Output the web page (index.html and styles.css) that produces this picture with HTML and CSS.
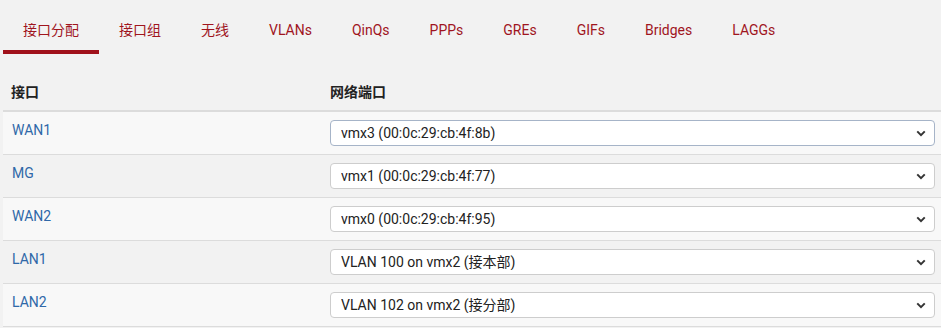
FILE: index.html
```html
<!DOCTYPE html>
<html lang="zh-CN">
<head>
    <meta charset="UTF-8">
    <meta name="viewport" content="width=device-width, initial-scale=1.0">
    <title>接口分配</title>
    <link rel="stylesheet" href="styles.css">
</head>
<body>
    <div class="page">
        <ul class="tabs">
            <li class="tab active"><a href="#">接口分配</a></li>
            <li class="tab"><a href="#">接口组</a></li>
            <li class="tab"><a href="#">无线</a></li>
            <li class="tab"><a href="#">VLANs</a></li>
            <li class="tab"><a href="#">QinQs</a></li>
            <li class="tab"><a href="#">PPPs</a></li>
            <li class="tab"><a href="#">GREs</a></li>
            <li class="tab"><a href="#">GIFs</a></li>
            <li class="tab"><a href="#">Bridges</a></li>
            <li class="tab"><a href="#">LAGGs</a></li>
        </ul>

        <table class="iface-table">
            <thead>
                <tr>
                    <th class="col-name">接口</th>
                    <th>网络端口</th>
                </tr>
            </thead>
            <tbody>
                <tr>
                    <td><a href="#">WAN1</a></td>
                    <td>
                        <div class="select-wrap">
                            <select class="port-select focused">
                                <option>vmx3 (00:0c:29:cb:4f:8b)</option>
                            </select>
                            <svg class="chevron" viewBox="0 0 12 8"><path d="M1.5 1.5 L6 6 L10.5 1.5" /></svg>
                        </div>
                    </td>
                </tr>
                <tr>
                    <td><a href="#">MG</a></td>
                    <td>
                        <div class="select-wrap">
                            <select class="port-select">
                                <option>vmx1 (00:0c:29:cb:4f:77)</option>
                            </select>
                            <svg class="chevron" viewBox="0 0 12 8"><path d="M1.5 1.5 L6 6 L10.5 1.5" /></svg>
                        </div>
                    </td>
                </tr>
                <tr>
                    <td><a href="#">WAN2</a></td>
                    <td>
                        <div class="select-wrap">
                            <select class="port-select">
                                <option>vmx0 (00:0c:29:cb:4f:95)</option>
                            </select>
                            <svg class="chevron" viewBox="0 0 12 8"><path d="M1.5 1.5 L6 6 L10.5 1.5" /></svg>
                        </div>
                    </td>
                </tr>
                <tr>
                    <td><a href="#">LAN1</a></td>
                    <td>
                        <div class="select-wrap">
                            <select class="port-select">
                                <option>VLAN 100 on vmx2 (接本部)</option>
                            </select>
                            <svg class="chevron" viewBox="0 0 12 8"><path d="M1.5 1.5 L6 6 L10.5 1.5" /></svg>
                        </div>
                    </td>
                </tr>
                <tr>
                    <td><a href="#">LAN2</a></td>
                    <td>
                        <div class="select-wrap">
                            <select class="port-select">
                                <option>VLAN 102 on vmx2 (接分部)</option>
                            </select>
                            <svg class="chevron" viewBox="0 0 12 8"><path d="M1.5 1.5 L6 6 L10.5 1.5" /></svg>
                        </div>
                    </td>
                </tr>
            </tbody>
        </table>
    </div>
</body>
</html>
```

FILE: styles.css
```css
html, body {
    margin: 0;
    padding: 0;
    background-color: #f2f2f2;
    overflow: hidden;
}

body {
    font-family: Roboto, "Noto Sans CJK SC", sans-serif;
    font-size: 14px;
    line-height: 20px;
    color: #222;
}

.page {
    padding-left: 3px;
    width: 940px;
}

.tabs {
    list-style: none;
    margin: 0;
    padding: 0;
    display: flex;
}

.tab a {
    display: block;
    padding: 20px 20px 10px 20px;
    border-bottom: 4px solid transparent;
    color: #a0151e;
    text-decoration: none;
}

.tab.active a {
    border-bottom-color: #a0111b;
}

.iface-table {
    margin-top: 20px;
    width: 940px;
    border-collapse: collapse;
}

.iface-table th,
.iface-table td {
    padding: 8px;
    text-align: left;
    vertical-align: top;
}

.iface-table th {
    font-weight: bold;
    color: #222;
    border-bottom: 2px solid #dcdcdc;
}

.iface-table td {
    border-bottom: 1px solid #dcdcdc;
}

.col-name {
    width: 303px;
}

.iface-table tbody tr:nth-child(odd) {
    background-color: #f8f8f8;
}

.iface-table td a {
    color: #2f68a8;
    text-decoration: none;
    padding-left: 1px;
}

.select-wrap {
    position: relative;
}

.port-select {
    -webkit-appearance: none;
    appearance: none;
    display: block;
    width: 100%;
    height: 26px;
    box-sizing: border-box;
    padding: 0 30px 0 10px;
    font-family: Roboto, "Noto Sans CJK SC", sans-serif;
    font-size: 14px;
    color: #222;
    background-color: #fff;
    border: 1px solid #cdcdcd;
    border-radius: 4px;
}

.port-select.focused {
    border-color: #a6b4c8;
}

.chevron {
    position: absolute;
    right: 9px;
    top: 10px;
    width: 10px;
    height: 7px;
    fill: none;
    stroke: #333;
    stroke-width: 2.4;
    pointer-events: none;
}
```
